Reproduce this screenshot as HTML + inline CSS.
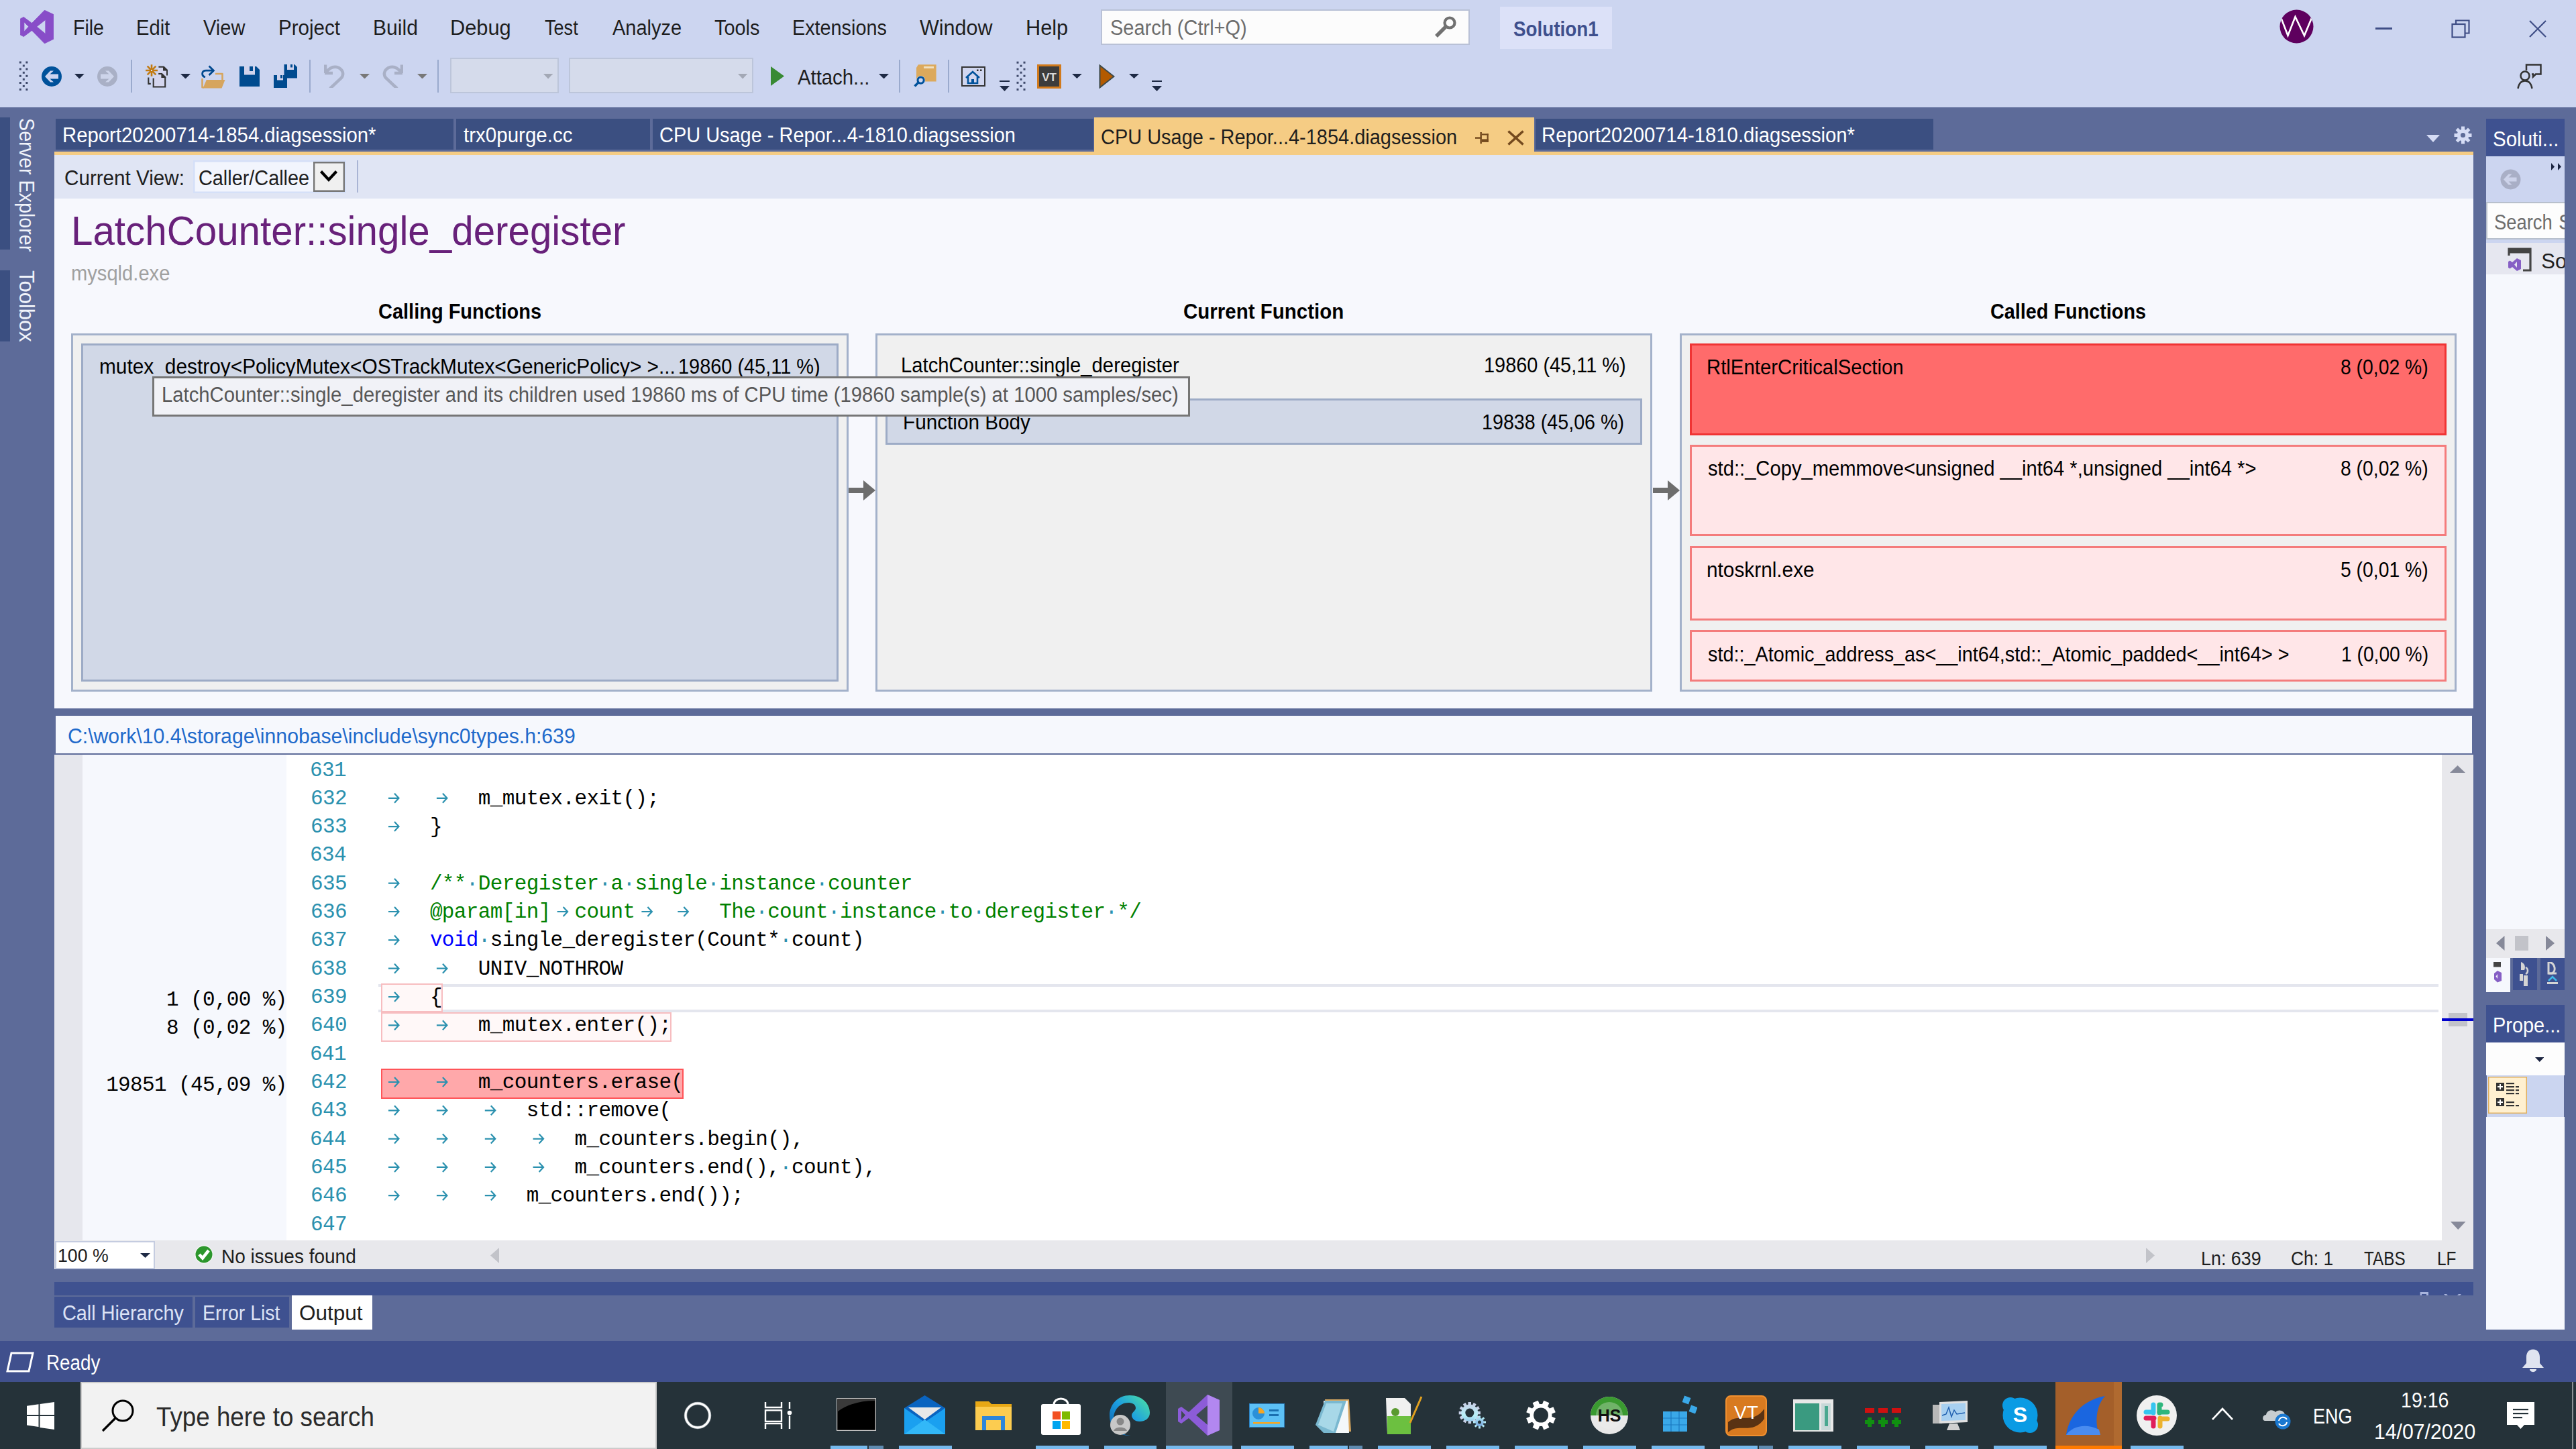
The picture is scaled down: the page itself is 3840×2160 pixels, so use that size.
<!DOCTYPE html>
<html><head><meta charset="utf-8"><style>
html,body{margin:0;padding:0;width:3840px;height:2160px;overflow:hidden;background:#5D6B99;}
.r{position:absolute;display:block;}
.t{position:absolute;white-space:pre;line-height:1;font-family:'Liberation Sans', sans-serif;transform-origin:0 0;}
</style></head><body>
<div class=r style="left:0.00px;top:0.00px;width:3840.00px;height:160.00px;background:#CCD5F0;"></div>
<div class=r style="left:0.00px;top:160.00px;width:3840.00px;height:1900.00px;background:#5D6B99;"></div>
<div class=t style="left:109.16px;top:26.26px;font-size:31px;color:#1E1E1E;transform:scaleX(0.9206);">File</div>
<div class=t style="left:203.12px;top:26.26px;font-size:31px;color:#1E1E1E;transform:scaleX(0.9410);">Edit</div>
<div class=t style="left:303.00px;top:26.26px;font-size:31px;color:#1E1E1E;transform:scaleX(0.9369);">View</div>
<div class=t style="left:415.09px;top:26.26px;font-size:31px;color:#1E1E1E;transform:scaleX(0.9540);">Project</div>
<div class=t style="left:556.06px;top:26.26px;font-size:31px;color:#1E1E1E;transform:scaleX(0.9704);">Build</div>
<div class=t style="left:671.01px;top:26.26px;font-size:31px;color:#1E1E1E;transform:scaleX(0.9931);">Debug</div>
<div class=t style="left:812.00px;top:26.26px;font-size:31px;color:#1E1E1E;transform:scaleX(0.8735);">Test</div>
<div class=t style="left:912.50px;top:26.26px;font-size:31px;color:#1E1E1E;transform:scaleX(0.9354);">Analyze</div>
<div class=t style="left:1065.00px;top:26.26px;font-size:31px;color:#1E1E1E;transform:scaleX(0.9323);">Tools</div>
<div class=t style="left:1181.14px;top:26.26px;font-size:31px;color:#1E1E1E;transform:scaleX(0.9287);">Extensions</div>
<div class=t style="left:1371.00px;top:26.26px;font-size:31px;color:#1E1E1E;transform:scaleX(0.9831);">Window</div>
<div class=t style="left:1529.02px;top:26.26px;font-size:31px;color:#1E1E1E;transform:scaleX(0.9915);">Help</div>
<div class=r style="left:1641.00px;top:14.00px;width:550.00px;height:53.00px;background:#FCFCFC;box-shadow:inset 0 0 0 2px #B9C1D6;"></div>
<div class=t style="left:1655.07px;top:26.26px;font-size:31px;color:#6D6D6D;transform:scaleX(0.9347);">Search (Ctrl+Q)</div>
<div class=r style="left:2236.00px;top:10.00px;width:167.00px;height:63.00px;background:#DCE1F8;"></div>
<div class=t style="left:2256.00px;top:27.51px;font-size:31px;color:#3E4F8D;font-weight:700;transform:scaleX(0.8974);">Solution1</div>
<div class=r style="left:83.00px;top:177.00px;width:593.00px;height:45.50px;background:#3B4F81;"></div>
<div class=t style="left:92.61px;top:185.76px;font-size:31px;color:#FFFFFF;transform:scaleX(0.9450);">Report20200714-1854.diagsession*</div>
<div class=r style="left:680.00px;top:177.00px;width:289.00px;height:45.50px;background:#3B4F81;"></div>
<div class=t style="left:691.00px;top:185.76px;font-size:31px;color:#FFFFFF;transform:scaleX(0.9525);">trx0purge.cc</div>
<div class=r style="left:973.00px;top:177.00px;width:657.00px;height:45.50px;background:#3B4F81;"></div>
<div class=t style="left:982.82px;top:185.76px;font-size:31px;color:#FFFFFF;transform:scaleX(0.9335);">CPU Usage - Repor...4-1810.diagsession</div>
<div class=r style="left:2289.00px;top:177.00px;width:593.00px;height:45.50px;background:#3B4F81;"></div>
<div class=t style="left:2298.11px;top:185.76px;font-size:31px;color:#FFFFFF;transform:scaleX(0.9440);">Report20200714-1810.diagsession*</div>
<div class=r style="left:1631.00px;top:175.00px;width:656.00px;height:56.00px;background:#F5CC84;"></div>
<div class=t style="left:1641.07px;top:188.76px;font-size:31px;color:#1E1E1E;transform:scaleX(0.9340);">CPU Usage - Repor...4-1854.diagsession</div>
<div class=r style="left:81.00px;top:226.00px;width:3606.00px;height:5.00px;background:#F5CC84;"></div>
<div class=r style="left:3706.00px;top:177.00px;width:117.00px;height:55.70px;background:#3E5190;"></div>
<div class=t style="left:3716.05px;top:191.76px;font-size:31px;color:#FFFFFF;transform:scaleX(0.9522);">Soluti...</div>
<div class=r style="left:0.00px;top:175.00px;width:15.00px;height:197.00px;background:#3B4F81;"></div>
<div class=r style="left:0.00px;top:403.00px;width:15.00px;height:105.50px;background:#3B4F81;"></div>
<div class=r style="left:81.00px;top:231.00px;width:3606.00px;height:65.00px;background:#E0E5F4;"></div>
<div class=t style="left:96.04px;top:249.76px;font-size:31px;color:#1E1E1E;transform:scaleX(0.9558);">Current View:</div>
<div class=r style="left:288.00px;top:239.20px;width:228.40px;height:48.40px;background:#F2F5FD;box-shadow:inset 0 0 0 2.6px #D5E0F8;"></div>
<div class=t style="left:296.07px;top:249.51px;font-size:31px;color:#1E1E1E;transform:scaleX(0.9302);">Caller/Callee</div>
<div class=r style="left:467.00px;top:241.20px;width:46.70px;height:44.50px;background:#F0F0F0;box-shadow:inset 0 0 0 2.4px #777777;"></div>
<div class=r style="left:531.50px;top:239.00px;width:2.00px;height:48.00px;background:#A9B4D4;"></div>
<div class=r style="left:81.00px;top:296.00px;width:3606.00px;height:760.00px;background:#F7F8FD;"></div>
<div class=t style="left:106.32px;top:314.46px;font-size:61px;color:#68217A;transform:scaleX(0.9558);">LatchCounter::single_deregister</div>
<div class=t style="left:105.92px;top:391.56px;font-size:31px;color:#A0A0A0;transform:scaleX(0.9398);">mysqld.exe</div>
<div class=t style="left:564.07px;top:449.26px;font-size:31px;color:#000000;font-weight:700;transform:scaleX(0.9348);">Calling Functions</div>
<div class=t style="left:1764.05px;top:449.26px;font-size:31px;color:#000000;font-weight:700;transform:scaleX(0.9520);">Current Function</div>
<div class=t style="left:2966.57px;top:449.26px;font-size:31px;color:#000000;font-weight:700;transform:scaleX(0.9293);">Called Functions</div>
<div class=r style="left:106.00px;top:496.50px;width:1159.00px;height:534.50px;background:#F0F0F0;box-shadow:inset 0 0 0 3px #A3B1CA;"></div>
<div class=r style="left:121.00px;top:511.50px;width:1129.00px;height:504.50px;background:#D1D8E7;box-shadow:inset 0 0 0 3px #9DABC6;"></div>
<div class=t style="left:147.57px;top:531.26px;font-size:31px;color:#000000;transform:scaleX(0.9627);">mutex_destroy&lt;PolicyMutex&lt;OSTrackMutex&lt;GenericPolicy&gt; &gt;...</div>
<div class=t style="left:1010.63px;top:531.26px;font-size:31px;color:#000000;transform:scaleX(0.9325);">19860 (45,11 %)</div>
<div class=r style="left:1305.00px;top:496.50px;width:1157.50px;height:534.50px;background:#F0F0F0;box-shadow:inset 0 0 0 3px #A3B1CA;"></div>
<div class=t style="left:1343.11px;top:528.76px;font-size:31px;color:#000000;transform:scaleX(0.9437);">LatchCounter::single_deregister</div>
<div class=t style="left:2212.13px;top:528.76px;font-size:31px;color:#000000;transform:scaleX(0.9325);">19860 (45,11 %)</div>
<div class=r style="left:1320.00px;top:593.50px;width:1127.50px;height:69.00px;background:#D1D8E7;box-shadow:inset 0 0 0 3px #9DABC6;"></div>
<div class=t style="left:1345.58px;top:613.76px;font-size:31px;color:#000000;transform:scaleX(0.9585);">Function Body</div>
<div class=t style="left:2209.15px;top:613.76px;font-size:31px;color:#000000;transform:scaleX(0.9252);">19838 (45,06 %)</div>
<div class=r style="left:2503.50px;top:496.50px;width:1158.00px;height:534.50px;background:#F0F0F0;box-shadow:inset 0 0 0 3px #A3B1CA;"></div>
<div class=r style="left:2518.50px;top:511.50px;width:1128.00px;height:137.00px;background:#FF6B6B;box-shadow:inset 0 0 0 3px #F03434;"></div>
<div class=t style="left:2544.11px;top:532.26px;font-size:31px;color:#000000;transform:scaleX(0.9467);">RtlEnterCriticalSection</div>
<div class=t style="left:3489.09px;top:532.26px;font-size:31px;color:#000000;transform:scaleX(0.9134);">8 (0,02 %)</div>
<div class=r style="left:2518.50px;top:662.50px;width:1128.00px;height:136.50px;background:#FFE6E8;box-shadow:inset 0 0 0 3px #F47C7C;"></div>
<div class=t style="left:2546.00px;top:682.76px;font-size:31px;color:#000000;transform:scaleX(0.9412);">std::_Copy_memmove&lt;unsigned __int64 *,unsigned __int64 *&gt;</div>
<div class=t style="left:3489.09px;top:682.76px;font-size:31px;color:#000000;transform:scaleX(0.9134);">8 (0,02 %)</div>
<div class=r style="left:2518.50px;top:813.50px;width:1128.00px;height:111.50px;background:#FFE6E8;box-shadow:inset 0 0 0 3px #F47C7C;"></div>
<div class=t style="left:2544.08px;top:833.76px;font-size:31px;color:#000000;transform:scaleX(0.9610);">ntoskrnl.exe</div>
<div class=t style="left:3489.09px;top:833.76px;font-size:31px;color:#000000;transform:scaleX(0.9134);">5 (0,01 %)</div>
<div class=r style="left:2518.50px;top:938.50px;width:1128.00px;height:77.50px;background:#FFE6E8;box-shadow:inset 0 0 0 3px #F47C7C;"></div>
<div class=t style="left:2546.00px;top:960.26px;font-size:31px;color:#000000;transform:scaleX(0.9294);">std::_Atomic_address_as&lt;__int64,std::_Atomic_padded&lt;__int64&gt; &gt;</div>
<div class=t style="left:3489.68px;top:960.26px;font-size:31px;color:#000000;transform:scaleX(0.9092);">1 (0,00 %)</div>
<svg class=r style="left:1265px;top:716px;" width="40" height="30" viewBox="0 0 40 30"><path d="M0 11 H22 V0 L40 15 L22 30 V19 H0 Z" fill="#6D6D6D"/></svg>
<svg class=r style="left:2463.5px;top:716px;" width="40" height="30" viewBox="0 0 40 30"><path d="M0 11 H22 V0 L40 15 L22 30 V19 H0 Z" fill="#6D6D6D"/></svg>
<div class=r style="left:227.00px;top:561.00px;width:1547.00px;height:59.50px;background:#F1F2F7;box-shadow:inset 0 0 0 3px #767676;"></div>
<div class=t style="left:240.61px;top:573.26px;font-size:31px;color:#575757;transform:scaleX(0.9438);">LatchCounter::single_deregister and its children used 19860 ms of CPU time (19860 sample(s) at 1000 samples/sec)</div>
<div class=r style="left:81.00px;top:1056.00px;width:3606.00px;height:11.00px;background:#5D6B99;"></div>
<div class=r style="left:83.00px;top:1067.00px;width:3602.00px;height:57.00px;background:#F6F8FD;"></div>
<div class=r style="left:83.00px;top:1123.00px;width:3602.00px;height:2.00px;background:#5D6B99;"></div>
<div class=t style="left:100.53px;top:1082.26px;font-size:31px;color:#1F6ACB;transform:scaleX(0.9736);">C:\work\10.4\storage\innobase\include\sync0types.h:639</div>
<div class=r style="left:81.00px;top:1125.00px;width:3559.00px;height:724.00px;background:#FFFFFF;"></div>
<div class=r style="left:81.00px;top:1125.00px;width:42.00px;height:724.00px;background:#E6E7ED;"></div>
<div class=r style="left:123.00px;top:1125.00px;width:304.00px;height:724.00px;background:#F6F8FD;"></div>
<div class=r style="left:3640.00px;top:1125.00px;width:47.00px;height:724.00px;background:#E8E8EC;"></div>
<div class=r style="left:81.00px;top:1849.00px;width:3606.00px;height:43.00px;background:#E8E8EC;"></div>
<div class=r style="left:81.50px;top:1849.50px;width:149.00px;height:42.20px;background:#FFFFFF;box-shadow:inset 0 0 0 2px #C5CCE0;"></div>
<div class=t style="left:85.93px;top:1857.37px;font-size:28.5px;color:#1E1E1E;transform:scaleX(0.9367);">100 %</div>
<div class=t style="left:329.60px;top:1857.53px;font-size:29.5px;color:#1E1E1E;transform:scaleX(0.9489);">No issues found</div>
<div class=t style="left:3280.68px;top:1860.63px;font-size:29.5px;color:#1E1E1E;transform:scaleX(0.9113);">Ln: 639</div>
<div class=t style="left:3415.10px;top:1860.63px;font-size:29.5px;color:#1E1E1E;transform:scaleX(0.8957);">Ch: 1</div>
<div class=t style="left:3524.00px;top:1860.63px;font-size:29.5px;color:#1E1E1E;transform:scaleX(0.8223);">TABS</div>
<div class=t style="left:3633.34px;top:1860.63px;font-size:29.5px;color:#1E1E1E;transform:scaleX(0.8279);">LF</div>
<div class=r style="left:81.00px;top:1911.00px;width:3606.00px;height:20.00px;background:#3F5290;"></div>
<div class=r style="left:81.00px;top:1933.00px;width:205.50px;height:46.00px;background:#3E5190;"></div>
<div class=t style="left:92.57px;top:1942.26px;font-size:31px;color:#DCE2F5;transform:scaleX(0.9297);">Call Hierarchy</div>
<div class=r style="left:291.00px;top:1933.00px;width:140.00px;height:46.00px;background:#3E5190;"></div>
<div class=t style="left:301.66px;top:1942.26px;font-size:31px;color:#DCE2F5;transform:scaleX(0.9184);">Error List</div>
<div class=r style="left:435.00px;top:1931.00px;width:120.00px;height:50.50px;background:#FFFFFF;"></div>
<div class=t style="left:446.48px;top:1942.26px;font-size:31px;color:#1E1E1E;transform:scaleX(1.0168);">Output</div>
<div class=r style="left:0.00px;top:1999.00px;width:3840.00px;height:61.00px;background:#40508D;"></div>
<div class=t style="left:69.21px;top:2016.26px;font-size:31px;color:#FFFFFF;transform:scaleX(0.8966);">Ready</div>
<div class=r style="left:3706.00px;top:233.00px;width:117.00px;height:68.00px;background:#CCD5F0;"></div>
<div class=r style="left:3706.00px;top:301.00px;width:122.00px;height:56.00px;background:#FDFDFD;box-shadow:inset 0 0 0 2px #B8C0CC;"></div>
<div class=t style="left:3718.12px;top:315.76px;font-size:31px;color:#6D6D6D;transform:scaleX(0.8825);">Search</div>
<div class=t style="left:3814.00px;top:315.76px;font-size:31px;color:#6D6D6D;">Solution</div>
<div class=r style="left:3706.00px;top:357.00px;width:117.00px;height:5.00px;background:#CCD5F0;"></div>
<div class=r style="left:3706.00px;top:362.00px;width:117.00px;height:47.00px;background:#E6E7F0;"></div>
<div class=t style="left:3788.30px;top:373.76px;font-size:31px;color:#1E1E1E;">So</div>
<div class=r style="left:3706.00px;top:409.00px;width:117.00px;height:976.00px;background:#F6F8FD;"></div>
<div class=r style="left:3706.00px;top:1385.00px;width:117.00px;height:43.00px;background:#E8E8EC;"></div>
<div class=r style="left:3706.00px;top:1428.00px;width:36.00px;height:51.00px;background:#F6F8FD;"></div>
<div class=r style="left:3746.00px;top:1428.00px;width:36.00px;height:48.00px;background:#3E5190;"></div>
<div class=r style="left:3787.00px;top:1428.00px;width:36.00px;height:48.00px;background:#3E5190;"></div>
<div class=r style="left:3706.00px;top:1498.00px;width:117.00px;height:55.50px;background:#3E5190;"></div>
<div class=t style="left:3716.13px;top:1512.76px;font-size:31px;color:#FFFFFF;transform:scaleX(0.9332);">Prope...</div>
<div class=r style="left:3706.00px;top:1553.50px;width:117.00px;height:49.20px;background:#FDFDFD;"></div>
<div class=r style="left:3707.00px;top:1602.70px;width:115.00px;height:62.30px;background:#CBD5F0;"></div>
<div class=r style="left:3706.00px;top:1665.00px;width:117.00px;height:317.00px;background:#F6F8FD;"></div>
<div class=r style="left:0.00px;top:2060.00px;width:3840.00px;height:100.00px;background:#253239;"></div>
<div class=r style="left:120.00px;top:2060.00px;width:859.00px;height:100.00px;background:#F2F2F2;box-shadow:inset 0 0 0 2px #CCCCCC;"></div>
<div class=t style="left:233.00px;top:2092.09px;font-size:41px;color:#2B2B2B;transform:scaleX(0.8966);">Type here to search</div>
<div class=t style="left:3448.26px;top:2095.76px;font-size:31px;color:#FFFFFF;transform:scaleX(0.8721);">ENG</div>
<div class=t style="left:3579.16px;top:2071.76px;font-size:31px;color:#FFFFFF;transform:scaleX(0.9215);">19:16</div>
<div class=t style="left:3539.05px;top:2118.76px;font-size:31px;color:#FFFFFF;transform:scaleX(0.9744);">14/07/2020</div>
<div class=r style="left:564.00px;top:1467.00px;width:3071.00px;height:42.00px;background:#FFFFFF;"></div>
<div class=r style="left:564.00px;top:1467.00px;width:3071.00px;height:4.00px;background:#E4E6EE;"></div>
<div class=r style="left:564.00px;top:1505.00px;width:3071.00px;height:4.00px;background:#E4E6EE;"></div>
<div class=r style="left:568.00px;top:1465.50px;width:91.50px;height:43.75px;background:#FFF8F8;box-shadow:inset 0 0 0 2px #F7BDC0;"></div>
<div class=r style="left:568.00px;top:1509.00px;width:433.00px;height:43.50px;background:#FFF8F8;box-shadow:inset 0 0 0 2px #F7BDC0;"></div>
<div class=r style="left:568.00px;top:1593.00px;width:451.00px;height:44.60px;background:#FFA8AA;box-shadow:inset 0 0 0 2px #FF5458;"></div>
<div class=t style="left:462.05px;top:1132.50px;font-size:31px;color:#2B91AF;font-family:'Liberation Mono', monospace;letter-spacing:-0.63px;">631</div>
<div class=t style="left:463.05px;top:1174.82px;font-size:31px;color:#2B91AF;font-family:'Liberation Mono', monospace;letter-spacing:-0.63px;">632</div>
<div class=t style="left:569.00px;top:1174.82px;font-size:31px;color:#000000;font-family:'Liberation Mono', monospace;letter-spacing:-0.63px;">        m_mutex.exit();</div>
<div class=t style="left:463.05px;top:1217.14px;font-size:31px;color:#2B91AF;font-family:'Liberation Mono', monospace;letter-spacing:-0.63px;">633</div>
<div class=t style="left:569.00px;top:1217.14px;font-size:31px;color:#000000;font-family:'Liberation Mono', monospace;letter-spacing:-0.63px;">    }</div>
<div class=t style="left:462.05px;top:1259.46px;font-size:31px;color:#2B91AF;font-family:'Liberation Mono', monospace;letter-spacing:-0.63px;">634</div>
<div class=t style="left:463.05px;top:1301.78px;font-size:31px;color:#2B91AF;font-family:'Liberation Mono', monospace;letter-spacing:-0.63px;">635</div>
<div class=t style="left:569.00px;top:1301.78px;font-size:31px;color:#008000;font-family:'Liberation Mono', monospace;letter-spacing:-0.63px;">    /** Deregister a single instance counter</div>
<div class=t style="left:569.00px;top:1301.78px;font-size:31px;color:#2B91AF;font-family:'Liberation Mono', monospace;letter-spacing:-0.63px;">       ·          · ·      ·        ·       </div>
<div class=t style="left:463.05px;top:1344.10px;font-size:31px;color:#2B91AF;font-family:'Liberation Mono', monospace;letter-spacing:-0.63px;">636</div>
<div class=t style="left:569.00px;top:1344.10px;font-size:31px;color:#008000;font-family:'Liberation Mono', monospace;letter-spacing:-0.63px;">    @param[in]  count       The count instance to deregister */</div>
<div class=t style="left:569.00px;top:1344.10px;font-size:31px;color:#2B91AF;font-family:'Liberation Mono', monospace;letter-spacing:-0.63px;">                               ·     ·        ·  ·          ·  </div>
<div class=t style="left:463.05px;top:1386.42px;font-size:31px;color:#2B91AF;font-family:'Liberation Mono', monospace;letter-spacing:-0.63px;">637</div>
<div class=t style="left:569.00px;top:1386.42px;font-size:31px;color:#0000FF;font-family:'Liberation Mono', monospace;letter-spacing:-0.63px;">    void                                </div>
<div class=t style="left:569.00px;top:1386.42px;font-size:31px;color:#000000;font-family:'Liberation Mono', monospace;letter-spacing:-0.63px;">         single_deregister(Count* count)</div>
<div class=t style="left:569.00px;top:1386.42px;font-size:31px;color:#2B91AF;font-family:'Liberation Mono', monospace;letter-spacing:-0.63px;">        ·                        ·      </div>
<div class=t style="left:463.05px;top:1428.74px;font-size:31px;color:#2B91AF;font-family:'Liberation Mono', monospace;letter-spacing:-0.63px;">638</div>
<div class=t style="left:569.00px;top:1428.74px;font-size:31px;color:#000000;font-family:'Liberation Mono', monospace;letter-spacing:-0.63px;">        UNIV_NOTHROW</div>
<div class=t style="left:463.05px;top:1471.06px;font-size:31px;color:#2B91AF;font-family:'Liberation Mono', monospace;letter-spacing:-0.63px;">639</div>
<div class=t style="left:569.00px;top:1471.06px;font-size:31px;color:#000000;font-family:'Liberation Mono', monospace;letter-spacing:-0.63px;">    {</div>
<div class=t style="left:463.05px;top:1513.38px;font-size:31px;color:#2B91AF;font-family:'Liberation Mono', monospace;letter-spacing:-0.63px;">640</div>
<div class=t style="left:569.00px;top:1513.38px;font-size:31px;color:#000000;font-family:'Liberation Mono', monospace;letter-spacing:-0.63px;">        m_mutex.enter();</div>
<div class=t style="left:462.05px;top:1555.70px;font-size:31px;color:#2B91AF;font-family:'Liberation Mono', monospace;letter-spacing:-0.63px;">641</div>
<div class=t style="left:463.05px;top:1598.02px;font-size:31px;color:#2B91AF;font-family:'Liberation Mono', monospace;letter-spacing:-0.63px;">642</div>
<div class=t style="left:569.00px;top:1598.02px;font-size:31px;color:#000000;font-family:'Liberation Mono', monospace;letter-spacing:-0.63px;">        m_counters.erase(</div>
<div class=t style="left:463.05px;top:1640.34px;font-size:31px;color:#2B91AF;font-family:'Liberation Mono', monospace;letter-spacing:-0.63px;">643</div>
<div class=t style="left:569.00px;top:1640.34px;font-size:31px;color:#000000;font-family:'Liberation Mono', monospace;letter-spacing:-0.63px;">            std::remove(</div>
<div class=t style="left:462.05px;top:1682.66px;font-size:31px;color:#2B91AF;font-family:'Liberation Mono', monospace;letter-spacing:-0.63px;">644</div>
<div class=t style="left:569.00px;top:1682.66px;font-size:31px;color:#000000;font-family:'Liberation Mono', monospace;letter-spacing:-0.63px;">                m_counters.begin(),</div>
<div class=t style="left:463.05px;top:1724.98px;font-size:31px;color:#2B91AF;font-family:'Liberation Mono', monospace;letter-spacing:-0.63px;">645</div>
<div class=t style="left:569.00px;top:1724.98px;font-size:31px;color:#000000;font-family:'Liberation Mono', monospace;letter-spacing:-0.63px;">                m_counters.end(), count),</div>
<div class=t style="left:569.00px;top:1724.98px;font-size:31px;color:#2B91AF;font-family:'Liberation Mono', monospace;letter-spacing:-0.63px;">                                 ·       </div>
<div class=t style="left:463.05px;top:1767.30px;font-size:31px;color:#2B91AF;font-family:'Liberation Mono', monospace;letter-spacing:-0.63px;">646</div>
<div class=t style="left:569.00px;top:1767.30px;font-size:31px;color:#000000;font-family:'Liberation Mono', monospace;letter-spacing:-0.63px;">            m_counters.end());</div>
<div class=t style="left:463.05px;top:1809.62px;font-size:31px;color:#2B91AF;font-family:'Liberation Mono', monospace;letter-spacing:-0.63px;">647</div>
<svg class=r style="left:0;top:0" width="3840" height="2160"><g fill="none" stroke="#2B91AF" stroke-width="2.2"><path d="M579.0 1189.8h15 M588.0 1182.8l6.5 7l-6.5 7" /><path d="M650.9 1189.8h15 M659.9 1182.8l6.5 7l-6.5 7" /><path d="M579.0 1232.1h15 M588.0 1225.1l6.5 7l-6.5 7" /><path d="M579.0 1316.7h15 M588.0 1309.7l6.5 7l-6.5 7" /><path d="M579.0 1359.0h15 M588.0 1352.0l6.5 7l-6.5 7" /><path d="M830.6 1359.0h15 M839.6 1352.0l6.5 7l-6.5 7" /><path d="M956.4 1359.0h15 M965.4 1352.0l6.5 7l-6.5 7" /><path d="M1010.3 1359.0h15 M1019.3 1352.0l6.5 7l-6.5 7" /><path d="M579.0 1401.4h15 M588.0 1394.4l6.5 7l-6.5 7" /><path d="M579.0 1443.7h15 M588.0 1436.7l6.5 7l-6.5 7" /><path d="M650.9 1443.7h15 M659.9 1436.7l6.5 7l-6.5 7" /><path d="M579.0 1486.0h15 M588.0 1479.0l6.5 7l-6.5 7" /><path d="M579.0 1528.3h15 M588.0 1521.3l6.5 7l-6.5 7" /><path d="M650.9 1528.3h15 M659.9 1521.3l6.5 7l-6.5 7" /><path d="M579.0 1613.0h15 M588.0 1606.0l6.5 7l-6.5 7" /><path d="M650.9 1613.0h15 M659.9 1606.0l6.5 7l-6.5 7" /><path d="M579.0 1655.3h15 M588.0 1648.3l6.5 7l-6.5 7" /><path d="M650.9 1655.3h15 M659.9 1648.3l6.5 7l-6.5 7" /><path d="M722.8 1655.3h15 M731.8 1648.3l6.5 7l-6.5 7" /><path d="M579.0 1697.6h15 M588.0 1690.6l6.5 7l-6.5 7" /><path d="M650.9 1697.6h15 M659.9 1690.6l6.5 7l-6.5 7" /><path d="M722.8 1697.6h15 M731.8 1690.6l6.5 7l-6.5 7" /><path d="M794.6 1697.6h15 M803.6 1690.6l6.5 7l-6.5 7" /><path d="M579.0 1739.9h15 M588.0 1732.9l6.5 7l-6.5 7" /><path d="M650.9 1739.9h15 M659.9 1732.9l6.5 7l-6.5 7" /><path d="M722.8 1739.9h15 M731.8 1732.9l6.5 7l-6.5 7" /><path d="M794.6 1739.9h15 M803.6 1732.9l6.5 7l-6.5 7" /><path d="M579.0 1782.2h15 M588.0 1775.2l6.5 7l-6.5 7" /><path d="M650.9 1782.2h15 M659.9 1775.2l6.5 7l-6.5 7" /><path d="M722.8 1782.2h15 M731.8 1775.2l6.5 7l-6.5 7" /></g></svg>
<div class=t style="left:247.99px;top:1474.56px;font-size:31px;color:#000000;font-family:'Liberation Mono', monospace;letter-spacing:-0.63px;">1 (0,00 %)</div>
<div class=t style="left:247.99px;top:1516.88px;font-size:31px;color:#000000;font-family:'Liberation Mono', monospace;letter-spacing:-0.63px;">8 (0,02 %)</div>
<div class=t style="left:158.13px;top:1601.52px;font-size:31px;color:#000000;font-family:'Liberation Mono', monospace;letter-spacing:-0.63px;">19851 (45,09 %)</div>
<svg class=r style="left:30px;top:15px" width="50" height="50" viewBox="0 0 50 50"><path d="M0.3 13 L5.3 10.4 L17.5 19.6 L36.4 0.3 L49.9 6.6 V43.2 L36.4 49.8 L17.5 30.4 L5.3 39.6 L0.3 37 Z M37.8 14.4 L24.8 24.8 L37.8 35.4 Z M5.9 17.8 V32 L12.7 24.8 Z" fill="#884DC8" fill-rule="evenodd" stroke="#884DC8" stroke-width="0.8" stroke-linejoin="round"/></svg>
<svg class=r style="left:0;top:0" width="1800" height="160"><g fill="#3F4A6B"><rect x="28.8" y="91.5" width="3" height="3"/><rect x="38.4" y="91.5" width="3" height="3"/><rect x="28.8" y="101.5" width="3" height="3"/><rect x="38.4" y="101.5" width="3" height="3"/><rect x="28.8" y="111.8" width="3" height="3"/><rect x="38.4" y="111.8" width="3" height="3"/><rect x="28.8" y="122.0" width="3" height="3"/><rect x="38.4" y="122.0" width="3" height="3"/><rect x="28.8" y="131.9" width="3" height="3"/><rect x="38.4" y="131.9" width="3" height="3"/><rect x="33.8" y="96.5" width="3" height="3"/><rect x="33.8" y="106.8" width="3" height="3"/><rect x="33.8" y="116.8" width="3" height="3"/><rect x="33.8" y="126.9" width="3" height="3"/></g></svg>
<svg class=r style="left:0;top:0" width="1800" height="160"><g fill="#3F4A6B"><rect x="1515.5" y="91.7" width="3" height="3"/><rect x="1525.5" y="91.7" width="3" height="3"/><rect x="1515.5" y="101.7" width="3" height="3"/><rect x="1525.5" y="101.7" width="3" height="3"/><rect x="1515.5" y="111.7" width="3" height="3"/><rect x="1525.5" y="111.7" width="3" height="3"/><rect x="1515.5" y="121.8" width="3" height="3"/><rect x="1525.5" y="121.8" width="3" height="3"/><rect x="1515.5" y="131.9" width="3" height="3"/><rect x="1525.5" y="131.9" width="3" height="3"/><rect x="1520.5" y="96.7" width="3" height="3"/><rect x="1520.5" y="106.7" width="3" height="3"/><rect x="1520.5" y="116.8" width="3" height="3"/><rect x="1520.5" y="126.9" width="3" height="3"/></g></svg>
<svg class=r style="left:62px;top:99px" width="30" height="30" viewBox="0 0 30 30"><circle cx="15" cy="15" r="15" fill="#00529B"/><path d="M5 15 L13 6.5 H18 L12.5 11.5 H25 V18.5 H12.5 L18 23.5 H13 Z" fill="#CCD5F0"/></svg>
<svg class=r style="left:145px;top:99px" width="30" height="30" viewBox="0 0 30 30"><circle cx="15" cy="15" r="15" fill="#A9B0C6"/><path d="M25 15 L17 6.5 H12 L17.5 11.5 H5 V18.5 H17.5 L12 23.5 H17 Z" fill="#CDD4EA"/></svg>
<svg class=r style="left:0px;top:0px;display:none" width="1" height="1" viewBox="0 0 1 1"></svg>
<svg class=r style="left:111.3px;top:109.8px" width="14.700000000000003" height="7.5" viewBox="0 0 14.700000000000003 7.5"><path d="M0 0H14.700000000000003L7.350000000000001 7.5Z" fill="#1E2A45"/></svg>
<div class=r style="left:195.20px;top:89.00px;width:2.00px;height:49.00px;background:#9AAACD;"></div>
<div class=r style="left:461.20px;top:89.00px;width:2.00px;height:49.00px;background:#9AAACD;"></div>
<div class=r style="left:652.20px;top:89.00px;width:2.00px;height:49.00px;background:#9AAACD;"></div>
<div class=r style="left:1340.20px;top:89.00px;width:2.00px;height:49.00px;background:#9AAACD;"></div>
<div class=r style="left:1413.20px;top:89.00px;width:2.00px;height:49.00px;background:#9AAACD;"></div>
<svg class=r style="left:210px;top:90px" width="50" height="50" viewBox="0 0 50 50"><path d="M26 9.7 H34.5 L39 14.3 V22.4 H36 V39.5 H18.7 V26 L24 20 Z" fill="#D4D6EE"/><g fill="none" stroke="#333" stroke-width="2.1"><path d="M26.4 9.7 H33.5"/><path d="M11.3 25.4 V34.9 H14.8"/><path d="M18.7 26.6 V39.5 H36.2 V25"/><path d="M26.2 20 H31"/></g><path d="M33 8.7 H34.6 L40 14 V22.4 H38 V15.5 H33 Z" fill="#333"/><path d="M30.4 19 H31.6 L37.3 24.4 V25.9 H30.4 Z" fill="#333"/><g stroke="#C27A10" stroke-width="2.6"><path d="M16 6.2 V23.8 M7.1 15 H25 M9.7 8.7 L22.3 21.3 M22.3 8.7 L9.7 21.3"/></g><rect x="15" y="14" width="2" height="2" fill="#D8DEF2"/></svg>
<svg class=r style="left:0px;top:0px;display:none" width="1" height="1" viewBox="0 0 1 1"></svg>
<svg class=r style="left:269px;top:109.8px" width="15" height="7.5" viewBox="0 0 15 7.5"><path d="M0 0H15L7.5 7.5Z" fill="#1E2A45"/></svg>
<svg class=r style="left:295px;top:90px" width="50" height="50" viewBox="0 0 50 50"><g fill="none" stroke="#D6A55E" stroke-width="2.6" stroke-linejoin="round"><path d="M6.5 27 V40.3 H9"/><path d="M25.9 20 H36.5 V29.5"/></g><path d="M12.8 29 H40.5 L35.5 41.6 H7.5 Z" fill="#D6A55E"/><g fill="none" stroke="#00498F" stroke-width="2.8"><path d="M11 25 C5 23.5 5 15.2 12.1 15.2 H23.5"/><path d="M16.6 8.5 L23.4 15.2 L16.6 22"/></g></svg>
<svg class=r style="left:357px;top:99px" width="30" height="30" viewBox="0 0 30 30"><path d="M0 0 H25 L30 5 V30 H0 Z" fill="#004B8F"/><rect x="7" y="0" width="16" height="12.5" fill="#D0D3EC"/><rect x="15" y="0" width="5" height="7" fill="#004B8F"/></svg>
<svg class=r style="left:408px;top:96px" width="36" height="36" viewBox="0 0 36 36"><path d="M15.5 0 H31 L35 4 V20.5 H15.5 Z" fill="#004B8F"/><rect x="20" y="0" width="10" height="8" fill="#D0D3EC"/><rect x="25" y="0" width="3" height="4.5" fill="#004B8F"/><path d="M0 16 H16 L20 20 V35 H0 Z" fill="#004B8F" stroke="#CCD5F0" stroke-width="0"/><rect x="5" y="16" width="9" height="7.5" fill="#D0D3EC"/><rect x="10" y="16" width="3" height="4.5" fill="#004B8F"/></svg>
<svg class=r style="left:483px;top:95px" width="32" height="36" viewBox="0 0 32 36"><path d="M2 14 V1.5 M1 14 H13" stroke="#A9B0C6" stroke-width="4.5" fill="none"/><path d="M3 13 C9 5 15 3 22 6 C29 10 30 17 25 22 L9 37" stroke="#A9B0C6" stroke-width="4.5" fill="none"/></svg>
<svg class=r style="left:0px;top:0px;display:none" width="1" height="1" viewBox="0 0 1 1"></svg>
<svg class=r style="left:536px;top:109.8px" width="15" height="7.5" viewBox="0 0 15 7.5"><path d="M0 0H15L7.5 7.5Z" fill="#787878"/></svg>
<svg class=r style="left:569px;top:95px" width="32" height="36" viewBox="0 0 32 36"><path d="M30 14 V1.5 M31 14 H19" stroke="#A9B0C6" stroke-width="4.5" fill="none"/><path d="M29 13 C23 5 17 3 10 6 C3 10 2 17 7 22 L23 37" stroke="#A9B0C6" stroke-width="4.5" fill="none"/></svg>
<svg class=r style="left:0px;top:0px;display:none" width="1" height="1" viewBox="0 0 1 1"></svg>
<svg class=r style="left:622px;top:109.8px" width="15" height="7.5" viewBox="0 0 15 7.5"><path d="M0 0H15L7.5 7.5Z" fill="#787878"/></svg>
<div class=r style="left:671.00px;top:86.00px;width:161.50px;height:53.00px;background:#D5DBEB;box-shadow:inset 0 0 0 2px #BCC5DA;"></div>
<svg class=r style="left:0px;top:0px;display:none" width="1" height="1" viewBox="0 0 1 1"></svg>
<svg class=r style="left:809.5px;top:110px" width="14.25" height="7.5" viewBox="0 0 14.25 7.5"><path d="M0 0H14.25L7.125 7.5Z" fill="#A3A8B5"/></svg>
<div class=r style="left:848.00px;top:86.00px;width:274.50px;height:53.00px;background:#D5DBEB;box-shadow:inset 0 0 0 2px #BCC5DA;"></div>
<svg class=r style="left:0px;top:0px;display:none" width="1" height="1" viewBox="0 0 1 1"></svg>
<svg class=r style="left:1099.5px;top:110px" width="14.25" height="7.5" viewBox="0 0 14.25 7.5"><path d="M0 0H14.25L7.125 7.5Z" fill="#A3A8B5"/></svg>
<svg class=r style="left:1149px;top:99px" width="20" height="29" viewBox="0 0 20 29"><path d="M0 0 L20 14.5 L0 29Z" fill="#388A34"/></svg>
<div class=t style="left:1189.00px;top:99.76px;font-size:31px;color:#1E1E1E;transform:scaleX(0.9450);">Attach...</div>
<svg class=r style="left:0px;top:0px;display:none" width="1" height="1" viewBox="0 0 1 1"></svg>
<svg class=r style="left:1310px;top:109.8px" width="15" height="7.5" viewBox="0 0 15 7.5"><path d="M0 0H15L7.5 7.5Z" fill="#1E2A45"/></svg>
<svg class=r style="left:1362px;top:95px" width="36" height="36" viewBox="0 0 36 36"><path d="M4 6 L7 1.3 H33.6 V26.5 H4 Z" fill="#DCA95C"/><rect x="15" y="4" width="15" height="3" fill="#F0E0C0"/><circle cx="10.6" cy="24.6" r="6.6" fill="#CCD5F0"/><circle cx="10.6" cy="24.6" r="4.6" fill="none" stroke="#00529B" stroke-width="3"/><path d="M7 28 L1.5 33.5" stroke="#00529B" stroke-width="3.5"/></svg>
<svg class=r style="left:1433px;top:99px" width="36" height="30" viewBox="0 0 36 30"><rect x="1" y="1" width="34" height="28" fill="#D0D6EF" stroke="#333" stroke-width="2"/><path d="M7 17 L17 8 L27 17" fill="none" stroke="#00529B" stroke-width="2.6"/><path d="M10 15.5 V25 H24 V15.5" fill="none" stroke="#00529B" stroke-width="2.6"/><rect x="15" y="19" width="4" height="6" fill="#00529B"/><rect x="23" y="4.5" width="2.5" height="2.5" fill="#333"/><rect x="28" y="4.5" width="2.5" height="2.5" fill="#333"/></svg>
<div class=r style="left:1489.80px;top:119.50px;width:15.00px;height:2.30px;background:#1E2A45;"></div>
<svg class=r style="left:0px;top:0px;display:none" width="1" height="1" viewBox="0 0 1 1"></svg>
<svg class=r style="left:1489.8px;top:128px" width="15.0" height="8" viewBox="0 0 15.0 8"><path d="M0 0H15.0L7.5 8Z" fill="#1E2A45"/></svg>
<div class=r style="left:1717.00px;top:119.50px;width:15.00px;height:2.30px;background:#1E2A45;"></div>
<svg class=r style="left:0px;top:0px;display:none" width="1" height="1" viewBox="0 0 1 1"></svg>
<svg class=r style="left:1717px;top:128px" width="15" height="8" viewBox="0 0 15 8"><path d="M0 0H15L7.5 8Z" fill="#1E2A45"/></svg>
<svg class=r style="left:1546px;top:96px" width="36" height="36" viewBox="0 0 36 36"><rect x="0" y="0" width="36" height="36" fill="#D17A1C"/><rect x="3" y="3" width="30" height="30" fill="#3C3C3C"/><text x="18" y="25" font-family="Liberation Sans" font-weight="700" font-size="17" fill="#D8D8D8" text-anchor="middle">VT</text></svg>
<svg class=r style="left:0px;top:0px;display:none" width="1" height="1" viewBox="0 0 1 1"></svg>
<svg class=r style="left:1598px;top:110.3px" width="14.799999999999955" height="7.0" viewBox="0 0 14.799999999999955 7.0"><path d="M0 0H14.799999999999955L7.399999999999977 7.0Z" fill="#1E2A45"/></svg>
<svg class=r style="left:1638px;top:96px" width="24" height="36" viewBox="0 0 24 36"><path d="M1.5 1.5 L22.5 18 L1.5 34.5Z" fill="#B35A00" stroke="#3E4A4A" stroke-width="2"/></svg>
<svg class=r style="left:0px;top:0px;display:none" width="1" height="1" viewBox="0 0 1 1"></svg>
<svg class=r style="left:1683px;top:110.3px" width="15" height="7.0" viewBox="0 0 15 7.0"><path d="M0 0H15L7.5 7.0Z" fill="#1E2A45"/></svg>
<svg class=r style="left:476px;top:253px" width="28" height="19" viewBox="0 0 28 19"><path d="M2.5 2.5 L14 15 L25.5 2.5" fill="none" stroke="#000" stroke-width="4.2"/></svg>
<div class=t style="left:22.5px;top:176px;font-size:31px;color:#F0F3FA;writing-mode:vertical-rl;line-height:32px;transform-origin:0 0;transform:scaleY(0.925)">Server Explorer</div>
<div class=t style="left:22.5px;top:403px;font-size:31px;color:#F0F3FA;writing-mode:vertical-rl;line-height:32px;">Toolbox</div>
<svg class=r style="left:3398px;top:14px" width="51" height="51" viewBox="0 0 51 51"><circle cx="25.5" cy="25.5" r="25" fill="#5E005E"/><clipPath id="avc"><circle cx="25.5" cy="25.5" r="25"/></clipPath><path clip-path="url(#avc)" d="M0.5 8 L12.5 39 L23.5 11 L37 39 L50 8" fill="none" stroke="#FFF" stroke-width="2.6"/></svg>
<div class=r style="left:3540.50px;top:41.00px;width:25.00px;height:2.50px;background:#3F4E86;"></div>
<svg class=r style="left:3654px;top:29px" width="28" height="28" viewBox="0 0 28 28"><g fill="none" stroke="#3F4E86" stroke-width="2.2"><rect x="1.5" y="7" width="19" height="19.5"/><path d="M7 7 V1.5 H26.5 V20.5 H20.5"/></g></svg>
<svg class=r style="left:3770px;top:30px" width="26" height="26" viewBox="0 0 26 26"><path d="M1 1 L25 25 M25 1 L1 25" stroke="#3F4E86" stroke-width="2.2"/></svg>
<svg class=r style="left:3752px;top:95px" width="38" height="38" viewBox="0 0 38 38"><g fill="none" stroke="#333" stroke-width="2.5"><circle cx="12" cy="18" r="6.5"/><path d="M1.5 37 C3 28 8 25.5 12 25.5 C16 25.5 21 28 22.5 37"/><path d="M14 10 V1.5 H35.5 V15.5 H28 L24 19.5 V15.5 H22"/></g></svg>
<svg class=r style="left:2138px;top:22px" width="36" height="35" viewBox="0 0 36 35"><g stroke="#717171" fill="none"><circle cx="23" cy="12" r="7.5" stroke-width="4.2"/><path d="M17 18 L3 32" stroke-width="5.5"/></g></svg>
<svg class=r style="left:2198px;top:196px" width="22" height="20" viewBox="0 0 22 20"><g fill="#744A1E"><rect x="1" y="8.4" width="9" height="2.4"/><rect x="8.4" y="1" width="2.5" height="17.2"/><rect x="10.9" y="3.3" width="9.9" height="2.2"/><rect x="18.6" y="3.3" width="2.2" height="12.6"/><rect x="10.9" y="11.4" width="9.9" height="4.5"/></g></svg>
<svg class=r style="left:2247px;top:194px" width="25" height="23" viewBox="0 0 25 23"><path d="M1.5 1.5 L23.5 21.5 M23.5 1.5 L1.5 21.5" stroke="#744A1E" stroke-width="3.6"/></svg>
<svg class=r style="left:0px;top:0px;display:none" width="1" height="1" viewBox="0 0 1 1"></svg>
<svg class=r style="left:3617px;top:201px" width="20" height="11" viewBox="0 0 20 11"><path d="M0 0H20L10.0 11Z" fill="#D5DCF5"/></svg>
<svg class=r style="left:3658px;top:188px" width="27" height="27" viewBox="0 0 27 27"><g fill="#D5DCF5"><rect x="11" y="0.5" width="5" height="6" transform="rotate(0 13.5 13.5)"/><rect x="11" y="0.5" width="5" height="6" transform="rotate(45 13.5 13.5)"/><rect x="11" y="0.5" width="5" height="6" transform="rotate(90 13.5 13.5)"/><rect x="11" y="0.5" width="5" height="6" transform="rotate(135 13.5 13.5)"/><rect x="11" y="0.5" width="5" height="6" transform="rotate(180 13.5 13.5)"/><rect x="11" y="0.5" width="5" height="6" transform="rotate(225 13.5 13.5)"/><rect x="11" y="0.5" width="5" height="6" transform="rotate(270 13.5 13.5)"/><rect x="11" y="0.5" width="5" height="6" transform="rotate(315 13.5 13.5)"/><circle cx="13.5" cy="13.5" r="9"/></g><circle cx="13.5" cy="13.5" r="3.6" fill="#5D6B99"/></svg>
<svg class=r style="left:3727px;top:252px" width="31" height="31" viewBox="0 0 31 31"><circle cx="15.5" cy="15.5" r="15" fill="#A9AFC6"/><path d="M5 15.5 L12.5 7.5 H17.5 L12.5 12.5 H24.5 V18.5 H12.5 L17.5 23.5 H12.5 Z" fill="#CDD3EA"/></svg>
<svg class=r style="left:3803px;top:243px" width="17" height="11" viewBox="0 0 17 11"><path d="M0 0 L5 5.5 L0 11Z M10 0 L15 5.5 L10 11Z" fill="#1B2440"/></svg>
<svg class=r style="left:3738px;top:369px" width="36" height="36" viewBox="0 0 36 36"><path d="M2 12 V2 H34 V34 H23" fill="none" stroke="#444" stroke-width="3.2"/><rect x="2" y="2" width="32" height="6.5" fill="#444"/><path d="M14 16 L20 19 V32 L14 35 L7 29 L3.5 31.5 L1 30 V21 L3.5 19.5 L7 22 Z M14 21 L10 25.5 L14 30Z" fill="#865FC5" fill-rule="evenodd"/></svg>
<svg class=r style="left:3721px;top:1395px" width="87" height="22" viewBox="0 0 87 22"><path d="M12.5 0 V22 L0 11Z M74 0 L87 11 L74 22Z" fill="#868999"/><rect x="28" y="0" width="20" height="22" fill="#C2C3C9"/></svg>
<svg class=r style="left:3717px;top:1433px" width="16" height="40" viewBox="0 0 16 40"><rect x="0" y="1" width="11" height="7.5" fill="#444"/><path d="M6 14 L12 17 V29 L6 31.5 L1 27 V18 Z M6 19 L3.5 22.5 L6 26Z" fill="#865FC5" fill-rule="evenodd"/></svg>
<svg class=r style="left:3756px;top:1434px" width="14" height="36" viewBox="0 0 14 36"><path d="M2 0 C8 2 9 8 7 12 H2 Z" fill="#D4D4D4"/><path d="M9 8 C13 10 13 16 9 18" fill="none" stroke="#D4D4D4" stroke-width="2.5"/><rect x="0" y="18" width="5" height="10" fill="#D4D4D4"/><rect x="6" y="20" width="6" height="16" fill="#D4D4D4"/></svg>
<svg class=r style="left:3797px;top:1434px" width="16" height="38" viewBox="0 0 16 38"><path d="M2 0 C12 1 14 14 7 17 H2 Z" fill="none" stroke="#D4D4D4" stroke-width="3"/><path d="M2 17 H14" stroke="#D4D4D4" stroke-width="3"/><path d="M2 28 L8 22 L14 28" fill="none" stroke="#3FB9E8" stroke-width="2.5"/><rect x="0" y="30" width="16" height="3" fill="#D4D4D4"/></svg>
<svg class=r style="left:0px;top:0px;display:none" width="1" height="1" viewBox="0 0 1 1"></svg>
<svg class=r style="left:3778.8px;top:1575.8px" width="13.5" height="7.0" viewBox="0 0 13.5 7.0"><path d="M0 0H13.5L6.75 7.0Z" fill="#1B2440"/></svg>
<svg class=r style="left:3709px;top:1605px" width="58" height="55" viewBox="0 0 58 55"><rect x="0.75" y="0.75" width="56.5" height="53.5" fill="#FFF0D0" stroke="#E0B060" stroke-width="1.5"/><g fill="#333"><rect x="12" y="9" width="12" height="12"/><rect x="12" y="32" width="12" height="12"/><rect x="27" y="9" width="12" height="2.2"/><rect x="27" y="14" width="12" height="2.2"/><rect x="27" y="19" width="12" height="2.2"/><rect x="27" y="24" width="12" height="2.2"/><rect x="41" y="14" width="5" height="2.2"/><rect x="41" y="19" width="5" height="2.2"/><rect x="41" y="24" width="5" height="2.2"/><rect x="27" y="37" width="12" height="2.2"/><rect x="27" y="42" width="12" height="2.2"/><rect x="41" y="42" width="5" height="2.2"/></g><g fill="#FFF"><rect x="17" y="11" width="2" height="8"/><rect x="14" y="14" width="8" height="2"/><rect x="17" y="34" width="2" height="8"/><rect x="14" y="37" width="8" height="2"/></g></svg>
<svg class=r style="left:3652px;top:1141px" width="23" height="11" viewBox="0 0 23 11"><path d="M0 11 L11.5 0 L23 11Z" fill="#868999"/></svg>
<svg class=r style="left:0px;top:0px;display:none" width="1" height="1" viewBox="0 0 1 1"></svg>
<svg class=r style="left:3653px;top:1821px" width="22.5" height="12" viewBox="0 0 22.5 12"><path d="M0 0H22.5L11.25 12Z" fill="#868999"/></svg>
<div class=r style="left:3649.50px;top:1510.00px;width:28.50px;height:20.00px;background:#C2C3C9;"></div>
<div class=r style="left:3640.00px;top:1518.00px;width:47.00px;height:4.00px;background:#0000CD;"></div>
<svg class=r style="left:731px;top:1860px" width="13" height="23" viewBox="0 0 13 23"><path d="M13 0 V23 L0 11.5Z" fill="#C2C3C9"/></svg>
<svg class=r style="left:3199px;top:1860px" width="13" height="23" viewBox="0 0 13 23"><path d="M0 0 V23 L13 11.5Z" fill="#C2C3C9"/></svg>
<svg class=r style="left:0px;top:0px;display:none" width="1" height="1" viewBox="0 0 1 1"></svg>
<svg class=r style="left:209px;top:1868px" width="15" height="7" viewBox="0 0 15 7"><path d="M0 0H15L7.5 7Z" fill="#1E2A45"/></svg>
<svg class=r style="left:290px;top:1856px" width="28" height="28" viewBox="0 0 28 28"><circle cx="14" cy="14" r="13.2" fill="#2C962C" stroke="#F4F4F4" stroke-width="1.4"/><path d="M7 14 L12 19.5 L21 8" fill="none" stroke="#FFF" stroke-width="4.5"/></svg>
<svg class=r style="left:9px;top:2015px" width="42" height="31" viewBox="0 0 42 31"><path d="M8 2 H40 L34 29 H2 Z" fill="none" stroke="#FFF" stroke-width="3"/></svg>
<svg class=r style="left:3759px;top:2010px" width="34" height="38" viewBox="0 0 34 38"><path d="M17 1.5 C24 1.5 27 7 27 13 V22 L33 29 H1 L7 22 V13 C7 7 10 1.5 17 1.5Z" fill="#E0E4F0"/><path d="M12 31 C12 36.5 22 36.5 22 31Z" fill="#E0E4F0"/></svg>
<svg class=r style="left:40px;top:2090px" width="41" height="41" viewBox="0 0 41 41"><g fill="#FFF"><path d="M0 5.8 L17.5 3.3 V19 H0Z"/><path d="M19.5 3 L41 0 V19 H19.5Z"/><path d="M0 21 H17.5 V37 L0 34.5Z"/><path d="M19.5 21 H41 V41 L19.5 38Z"/></g></svg>
<svg class=r style="left:150px;top:2084px" width="52" height="52" viewBox="0 0 52 52"><circle cx="33" cy="19" r="15" fill="none" stroke="#000" stroke-width="3"/><path d="M22.5 29.5 L3 49" stroke="#000" stroke-width="3.2"/></svg>
<svg class=r style="left:1019px;top:2089px" width="42" height="42" viewBox="0 0 42 42"><circle cx="21" cy="21" r="18" fill="none" stroke="#9AA3A8" stroke-width="4.5"/><circle cx="21" cy="21" r="18" fill="none" stroke="#FFF" stroke-width="3"/></svg>
<svg class=r style="left:1138px;top:2089px" width="44" height="42" viewBox="0 0 44 42"><g fill="none" stroke="#FFF" stroke-width="2.4"><path d="M3 1 V9 H27 V1"/><rect x="3" y="13.3" width="24" height="16.6"/><path d="M3 41 V33 H27 V41"/><path d="M39 1 V11 M39 21.5 V41"/></g><circle cx="39" cy="17" r="3.3" fill="#FFF"/></svg>
<div class=r style="left:1238.00px;top:2155.00px;width:55.40px;height:5.00px;background:#76B9ED;"></div>
<div class=r style="left:1295.00px;top:2155.00px;width:22.00px;height:5.00px;background:#5F8BB0;"></div>
<div class=r style="left:1339.70px;top:2155.00px;width:79.30px;height:5.00px;background:#76B9ED;"></div>
<div class=r style="left:1543.50px;top:2155.00px;width:79.30px;height:5.00px;background:#76B9ED;"></div>
<div class=r style="left:1645.60px;top:2155.00px;width:78.90px;height:5.00px;background:#76B9ED;"></div>
<div class=r style="left:1738.00px;top:2155.00px;width:98.50px;height:5.00px;background:#76B9ED;"></div>
<div class=r style="left:1849.80px;top:2155.00px;width:78.90px;height:5.00px;background:#76B9ED;"></div>
<div class=r style="left:1951.80px;top:2155.00px;width:57.10px;height:5.00px;background:#76B9ED;"></div>
<div class=r style="left:2010.60px;top:2155.00px;width:20.10px;height:5.00px;background:#5F8BB0;"></div>
<div class=r style="left:2053.90px;top:2155.00px;width:78.90px;height:5.00px;background:#76B9ED;"></div>
<div class=r style="left:2155.60px;top:2155.00px;width:79.60px;height:5.00px;background:#76B9ED;"></div>
<div class=r style="left:2258.00px;top:2155.00px;width:78.90px;height:5.00px;background:#76B9ED;"></div>
<div class=r style="left:2359.70px;top:2155.00px;width:79.20px;height:5.00px;background:#76B9ED;"></div>
<div class=r style="left:2461.80px;top:2155.00px;width:79.20px;height:5.00px;background:#76B9ED;"></div>
<div class=r style="left:2563.80px;top:2155.00px;width:56.40px;height:5.00px;background:#76B9ED;"></div>
<div class=r style="left:2622.00px;top:2155.00px;width:21.10px;height:5.00px;background:#5F8BB0;"></div>
<div class=r style="left:2666.00px;top:2155.00px;width:79.30px;height:5.00px;background:#76B9ED;"></div>
<div class=r style="left:2767.80px;top:2155.00px;width:78.80px;height:5.00px;background:#76B9ED;"></div>
<div class=r style="left:2870.00px;top:2155.00px;width:79.00px;height:5.00px;background:#76B9ED;"></div>
<div class=r style="left:2971.80px;top:2155.00px;width:78.80px;height:5.00px;background:#76B9ED;"></div>
<div class=r style="left:3176.30px;top:2155.00px;width:78.70px;height:5.00px;background:#76B9ED;"></div>
<div class=r style="left:1738.00px;top:2060.00px;width:98.50px;height:95.00px;background:#3E4A52;"></div>
<div class=r style="left:3063.80px;top:2060.00px;width:99.00px;height:95.00px;background:#A45F2A;"></div>
<div class=r style="left:3150.60px;top:2060.00px;width:12.20px;height:95.00px;background:#B06A30;"></div>
<div class=r style="left:3063.80px;top:2155.00px;width:99.00px;height:5.00px;background:#FF7A00;"></div>
<svg class=r style="left:1247px;top:2084px" width="59" height="49" viewBox="0 0 59 49"><rect x="0.5" y="0.5" width="58" height="48" fill="#000" stroke="#C8C8C8" stroke-width="1.5"/><path d="M2 20 C15 10 35 4 57 4 V2 H2Z" fill="#3A3A3A"/></svg>
<svg class=r style="left:1348px;top:2080px" width="61" height="58" viewBox="0 0 61 58"><path d="M0 19 L30.5 0 L61 19 V58 H0Z" fill="#0A64C0"/><path d="M6 18 H55 L30.5 36Z" fill="#E8E8E8"/><path d="M0 19 L30.5 40 L61 19 V58 H0Z" fill="#1AA0F0"/><path d="M0 58 L30.5 36 L61 58Z" fill="#32B8F8"/></svg>
<svg class=r style="left:1454px;top:2087px" width="54" height="45" viewBox="0 0 54 45"><path d="M0 2 H20 L24 6 H54 V45 H0Z" fill="#E8A815"/><path d="M0 10 H54 V45 H0Z" fill="#FCCC50"/><path d="M10 45 V24 H44 V45 H38 V30 H16 V45Z" fill="#2E86D8"/></svg>
<svg class=r style="left:1552px;top:2080px" width="59" height="59" viewBox="0 0 59 59"><path d="M19 14 C19 2 40 2 40 14" fill="none" stroke="#FFF" stroke-width="3"/><rect x="0" y="13" width="59" height="46" rx="3" fill="#FFF"/><rect x="17" y="24" width="12" height="12" fill="#F25022"/><rect x="31" y="24" width="12" height="12" fill="#7FBA00"/><rect x="17" y="38" width="12" height="12" fill="#00A4EF"/><rect x="31" y="38" width="12" height="12" fill="#FFB900"/></svg>
<svg class=r style="left:1653px;top:2079px" width="62" height="62" viewBox="0 0 62 62"><defs><linearGradient id="eg" x1="0" y1="1" x2="1" y2="0"><stop offset="0" stop-color="#0C59A4"/><stop offset="0.5" stop-color="#1B9DE2"/><stop offset="1" stop-color="#50E6A0"/></linearGradient></defs><path d="M31 1 C50 1 61 14 61 27 C61 36 53 40 46 40 C38 40 34 35 34 31 C34 26 40 24 40 20 C40 14 34 12 29 12 C16 12 7 23 7 36 C7 50 19 61 33 61 C14 62 1 49 1 31 C1 14 14 1 31 1Z" fill="url(#eg)"/><circle cx="17" cy="45" r="15" fill="#C8C8C8"/><circle cx="17" cy="40" r="5.5" fill="#888"/><path d="M7 54 C9 47 25 47 27 54Z" fill="#888"/></svg>
<svg class=r style="left:1756px;top:2079px" width="62" height="61" viewBox="0 0 62 61"><path d="M44 0 L62 8 V53 L44 61 L16 35 L5 43 L0 40 V21 L5 18 L16 26Z M44 16 L27 30.5 L44 45Z M5 24 V37 L11 30.5Z" fill="#8C5CD8" fill-rule="evenodd"/><path d="M44 0 L62 8 V53 L44 61Z" fill="#B287F0"/></svg>
<svg class=r style="left:1862px;top:2092px" width="53" height="36" viewBox="0 0 53 36"><rect x="0.5" y="0.5" width="52" height="35" fill="#5CC0F5" stroke="#2A7FC0"/><circle cx="14" cy="15" r="9" fill="#2A90D8"/><path d="M14 6 A9 9 0 0 1 23 15 H14Z" fill="#F5A623"/><rect x="6" y="28" width="40" height="2.5" fill="#F5A623"/><rect x="30" y="9" width="14" height="3" fill="#1A6FB0"/><rect x="30" y="16" width="14" height="3" fill="#1A6FB0"/></svg>
<svg class=r style="left:1961px;top:2084px" width="55" height="54" viewBox="0 0 55 54"><path d="M14 2 H50 L53 50 H20Z" fill="#D8A860"/><path d="M12 4 H48 L50 52 H14Z" fill="#F4F8FA"/><path d="M0 40 L14 4 H46 L30 52 H12Z" fill="#7AB8D0"/><path d="M4 40 L16 8 H40 L27 50Z" fill="#A8D8E8"/></svg>
<svg class=r style="left:2066px;top:2081px" width="55" height="57" viewBox="0 0 55 57"><path d="M0 3 H28 L37 12 V57 H2Z" fill="#F0F0F0"/><path d="M2 30 H37 V57 H2Z" fill="#6CC040"/><circle cx="14" cy="24" r="6" fill="#5A9A30"/><path d="M36 40 L53 1" stroke="#E0A020" stroke-width="3"/></svg>
<svg class=r style="left:2170px;top:2085px" width="50" height="50" viewBox="0 0 50 50"><defs><linearGradient id="gg" gradientUnits="userSpaceOnUse" x1="0" y1="6" x2="0" y2="44"><stop offset="0" stop-color="#C8D0E8"/><stop offset="0.5" stop-color="#B8F0F8"/><stop offset="1" stop-color="#6A98D8"/></linearGradient></defs><g fill="url(#gg)"><rect x="18.5" y="5" width="4.5" height="5" transform="rotate(0 20.8 21.1)"/><rect x="18.5" y="5" width="4.5" height="5" transform="rotate(30 20.8 21.1)"/><rect x="18.5" y="5" width="4.5" height="5" transform="rotate(60 20.8 21.1)"/><rect x="18.5" y="5" width="4.5" height="5" transform="rotate(90 20.8 21.1)"/><rect x="18.5" y="5" width="4.5" height="5" transform="rotate(120 20.8 21.1)"/><rect x="18.5" y="5" width="4.5" height="5" transform="rotate(150 20.8 21.1)"/><rect x="18.5" y="5" width="4.5" height="5" transform="rotate(180 20.8 21.1)"/><rect x="18.5" y="5" width="4.5" height="5" transform="rotate(210 20.8 21.1)"/><rect x="18.5" y="5" width="4.5" height="5" transform="rotate(240 20.8 21.1)"/><rect x="18.5" y="5" width="4.5" height="5" transform="rotate(270 20.8 21.1)"/><rect x="18.5" y="5" width="4.5" height="5" transform="rotate(300 20.8 21.1)"/><rect x="18.5" y="5" width="4.5" height="5" transform="rotate(330 20.8 21.1)"/><circle cx="20.8" cy="21.1" r="12.5"/><rect x="34" y="25.5" width="3" height="4" transform="rotate(0 35.5 35)"/><rect x="34" y="25.5" width="3" height="4" transform="rotate(45 35.5 35)"/><rect x="34" y="25.5" width="3" height="4" transform="rotate(90 35.5 35)"/><rect x="34" y="25.5" width="3" height="4" transform="rotate(135 35.5 35)"/><rect x="34" y="25.5" width="3" height="4" transform="rotate(180 35.5 35)"/><rect x="34" y="25.5" width="3" height="4" transform="rotate(225 35.5 35)"/><rect x="34" y="25.5" width="3" height="4" transform="rotate(270 35.5 35)"/><rect x="34" y="25.5" width="3" height="4" transform="rotate(315 35.5 35)"/><circle cx="35.5" cy="35" r="6.2"/></g><circle cx="20.8" cy="21.1" r="6.5" fill="#253239"/><circle cx="35.5" cy="35" r="2.5" fill="#253239"/></svg>
<svg class=r style="left:2274px;top:2087px" width="46" height="46" viewBox="0 0 46 46"><g fill="#FFF"><rect x="18.6" y="0.8" width="8.8" height="9" transform="rotate(22.5 23 22.6)"/><rect x="18.6" y="0.8" width="8.8" height="9" transform="rotate(67.5 23 22.6)"/><rect x="18.6" y="0.8" width="8.8" height="9" transform="rotate(112.5 23 22.6)"/><rect x="18.6" y="0.8" width="8.8" height="9" transform="rotate(157.5 23 22.6)"/><rect x="18.6" y="0.8" width="8.8" height="9" transform="rotate(202.5 23 22.6)"/><rect x="18.6" y="0.8" width="8.8" height="9" transform="rotate(247.5 23 22.6)"/><rect x="18.6" y="0.8" width="8.8" height="9" transform="rotate(292.5 23 22.6)"/><rect x="18.6" y="0.8" width="8.8" height="9" transform="rotate(337.5 23 22.6)"/><circle cx="23" cy="22.6" r="16.5"/></g><circle cx="23" cy="22.6" r="11" fill="#253239"/></svg>
<svg class=r style="left:2371px;top:2082px" width="56" height="56" viewBox="0 0 56 56"><circle cx="28" cy="28" r="28" fill="#E8E8E8"/><path d="M0 28 A28 28 0 0 1 56 28Z" fill="#3A9A30"/><circle cx="28" cy="28" r="20" fill="#F0F0F0" opacity="0.3"/><text x="28" y="37" font-family="Liberation Sans" font-weight="700" font-size="25" fill="#111" text-anchor="middle">HS</text></svg>
<svg class=r style="left:2479px;top:2080px" width="51" height="54" viewBox="0 0 51 54"><g fill="#3AA8E8"><rect x="0" y="24" width="36" height="30"/><rect x="30" y="2" width="10" height="10" transform="rotate(20 35 7)"/><rect x="40" y="16" width="10" height="10" transform="rotate(20 45 21)"/></g><g stroke="#1A78C0" stroke-width="1.2"><path d="M0 34H36M0 44H36M12 24V54M24 24V54"/></g></svg>
<svg class=r style="left:2572px;top:2080px" width="62" height="61" viewBox="0 0 62 61"><rect x="1" y="1" width="60" height="59" rx="7" fill="#D87A20" stroke="#F09030" stroke-width="2"/><path d="M4 40 C20 25 40 45 58 20 V35 C40 60 20 40 4 55Z" fill="#3A2010" opacity="0.8"/><text x="31" y="35" font-family="Liberation Sans" font-size="28" fill="#FFF" text-anchor="middle">VT</text></svg>
<svg class=r style="left:2673px;top:2086px" width="60" height="48" viewBox="0 0 60 48"><rect x="0" y="0" width="60" height="48" fill="#E8E8E8"/><rect x="3" y="6" width="36" height="40" fill="#3A9A80"/><rect x="42" y="6" width="14" height="40" fill="#C8D8D8"/><rect x="47" y="10" width="5" height="30" fill="#4AA890"/></svg>
<svg class=r style="left:2780px;top:2099px" width="55" height="30" viewBox="0 0 55 30"><g fill="#D01010"><rect x="0" y="0" width="14" height="7"/><rect x="20" y="0" width="14" height="7"/><rect x="40" y="0" width="14" height="7"/></g><g fill="#109010"><path d="M4 14h6v4h4v6h-4v4h-6v-4h-4v-6h4z"/><path d="M24 14h6v4h4v6h-4v4h-6v-4h-4v-6h4z"/><path d="M44 14h6v4h4v6h-4v4h-6v-4h-4v-6h4z"/></g></svg>
<svg class=r style="left:2881px;top:2088px" width="54" height="46" viewBox="0 0 54 46"><rect x="0" y="6" width="14" height="28" fill="#B8B8B8"/><path d="M10 2 L52 0 V32 L10 34Z" fill="#E0E0E0"/><path d="M13 5 L49 3.5 V29 L13 30Z" fill="#A8D0F0"/><path d="M14 22 L20 20 L24 10 L28 24 L32 14 L36 20 L48 18" fill="none" stroke="#2060B0" stroke-width="1.5"/><path d="M25 34 H37 L41 44 H21Z" fill="#D0D0D0"/></svg>
<svg class=r style="left:2984px;top:2082px" width="55" height="55" viewBox="0 0 55 55"><circle cx="27.5" cy="27.5" r="26" fill="#0A9BE4"/><circle cx="13" cy="13" r="12" fill="#0A9BE4"/><circle cx="42" cy="42" r="12" fill="#0A9BE4"/><text x="27.5" y="38" font-family="Liberation Sans" font-weight="700" font-size="32" fill="#FFF" text-anchor="middle">S</text></svg>
<svg class=r style="left:3079px;top:2081px" width="60" height="58" viewBox="0 0 60 58"><path d="M1 58 C5 30 25 6 59 0 C45 15 44 40 50 58Z" fill="#1A66E0"/><path d="M1 58 C10 45 30 40 50 50 L52 58Z" fill="#4A8CF0"/></svg>
<svg class=r style="left:3185px;top:2080px" width="60" height="60" viewBox="0 0 60 60"><circle cx="30" cy="30" r="30" fill="#F0F0F0"/><g stroke-linecap="round" stroke-width="7"><path d="M25 14 V26 M14 25 H22" stroke="#36C5F0"/><path d="M34 14 V26 M36 14 V14" stroke="#2EB67D"/><path d="M46 25 H34" stroke="#2EB67D"/><path d="M35 46 V34 M46 35 H38" stroke="#ECB22E"/><path d="M14 34 H26 M25 46 V38" stroke="#E01E5A"/></g></svg>
<svg class=r style="left:3297px;top:2098px" width="32" height="19" viewBox="0 0 32 19"><path d="M1 18 L16 2 L31 18" fill="none" stroke="#FFF" stroke-width="2.6"/></svg>
<svg class=r style="left:3372px;top:2092px" width="44" height="40" viewBox="0 0 44 40"><path d="M4 26 C0 26 0 17 6 17 C7 10 16 8 20 13 C25 8 34 11 34 18 C38 18 40 26 34 26Z" fill="#C8CDD0"/><circle cx="31" cy="27" r="11.5" fill="#1A78D0"/><path d="M25 26 A6.5 6.5 0 0 1 37 24 M37 28 A6.5 6.5 0 0 1 25 30" fill="none" stroke="#FFF" stroke-width="2"/></svg>
<svg class=r style="left:3737px;top:2090px" width="41" height="41" viewBox="0 0 41 41"><path d="M0 0 H41 V34 H26 L20.5 40 L15 34 H0Z" fill="#FFF"/><g fill="#253239"><rect x="9" y="10" width="23" height="2.2"/><rect x="9" y="16" width="23" height="2.2"/><rect x="9" y="22" width="14" height="2.2"/></g></svg>
<div class=r style="left:3834.00px;top:2060.00px;width:2.00px;height:100.00px;background:#8A9094;"></div>
<div class=r style="left:3823.00px;top:160.00px;width:17.00px;height:1839.00px;background:#5D6B99;"></div>
<svg class=r style="left:3607px;top:1926px" width="62" height="5" viewBox="0 0 62 5"><path d="M0.7 0 H13 V5 H10 V3 H3 V5 H0.7Z" fill="#A8B4DC"/><path d="M36 3 L40 3 L42 5 H38Z M58 3 H62 L60 5 H56Z" fill="#A8B4DC"/></svg>
</body></html>
